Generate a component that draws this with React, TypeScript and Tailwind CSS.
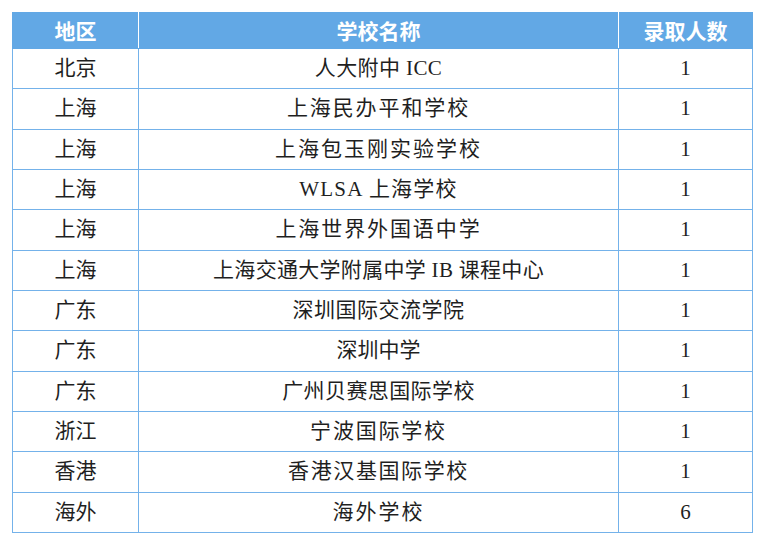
const rows: { area: string; school: string; count: string; tracking: string }[] = [
  { area: "北京", school: "人大附中 ICC", count: "1", tracking: "tracking-[0.4px]" },
  { area: "上海", school: "上海民办平和学校", count: "1", tracking: "tracking-[1.9px]" },
  { area: "上海", school: "上海包玉刚实验学校", count: "1", tracking: "tracking-[2px]" },
  { area: "上海", school: "WLSA 上海学校", count: "1", tracking: "tracking-[1.2px]" },
  { area: "上海", school: "上海世界外国语中学", count: "1", tracking: "tracking-[1.9px]" },
  { area: "上海", school: "上海交通大学附属中学 IB 课程中心", count: "1", tracking: "tracking-[0.3px]" },
  { area: "广东", school: "深圳国际交流学院", count: "1", tracking: "tracking-[0.5px]" },
  { area: "广东", school: "深圳中学", count: "1", tracking: "tracking-normal" },
  { area: "广东", school: "广州贝赛思国际学校", count: "1", tracking: "tracking-[0.4px]" },
  { area: "浙江", school: "宁波国际学校", count: "1", tracking: "tracking-[1.8px]" },
  { area: "香港", school: "香港汉基国际学校", count: "1", tracking: "tracking-[1.6px]" },
  { area: "海外", school: "海外学校", count: "6", tracking: "tracking-[2px]" },
]

export default function App() {
  return (
    <div className="w-[771px] h-[547px] bg-white pt-[12px] pl-[12px]">
      <table className="border-collapse w-[740px] table-fixed">
        <colgroup>
          <col className="w-[126px]" />
          <col className="w-[480px]" />
          <col className="w-[134px]" />
        </colgroup>
        <thead>
          <tr className="h-[36px] bg-[#62a8e5] text-white font-bold text-[21px] font-['Noto_Sans_CJK_SC',sans-serif]">
            <th className="border border-[#62a8e5] border-r-white leading-none">地区</th>
            <th className="border border-[#62a8e5] border-r-white leading-none">学校名称</th>
            <th className="border border-[#62a8e5] leading-none">录取人数</th>
          </tr>
        </thead>
        <tbody className="text-[21px] text-[#1f1f1f] font-['Liberation_Serif','Noto_Sans_CJK_SC',serif]">
          {rows.map((r, i) => (
            <tr key={i} className="h-[40.33px]">
              <td className="border border-[#74b2ea] text-center leading-none">{r.area}</td>
              <td className="border border-[#74b2ea] text-center leading-none">
                <span className={r.tracking}>{r.school}</span>
              </td>
              <td className="border border-[#74b2ea] text-center leading-none">{r.count}</td>
            </tr>
          ))}
        </tbody>
      </table>
    </div>
  )
}
